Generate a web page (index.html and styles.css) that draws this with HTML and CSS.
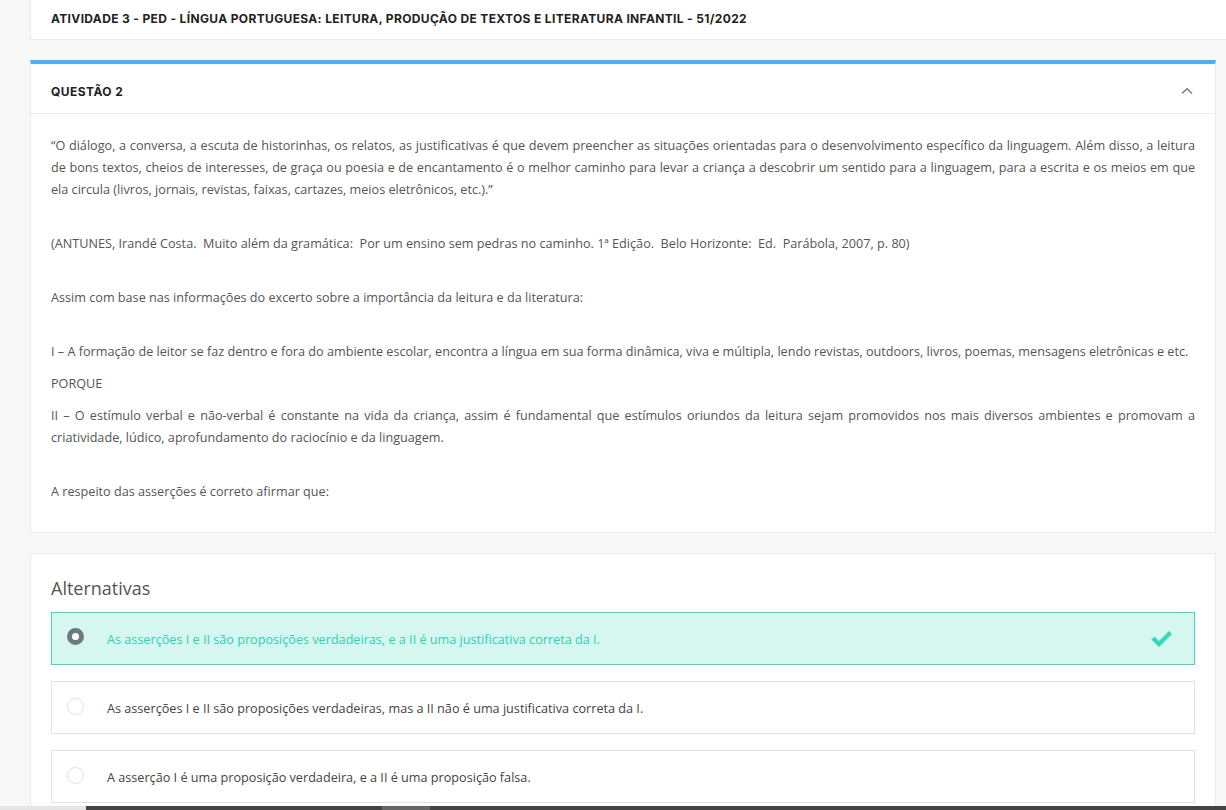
FILE: index.html
```html
<!DOCTYPE html>
<html lang="pt">
<head>
<meta charset="utf-8">
<title>Questão 2</title>
<link rel="stylesheet" href="styles.css">
</head>
<body>
<div class="page">
  <header class="topbar">
    <h1 class="activity-title">ATIVIDADE 3 - PED - LÍNGUA PORTUGUESA: LEITURA, PRODUÇÃO DE TEXTOS E LITERATURA INFANTIL - 51/2022</h1>
  </header>

  <section class="question">
    <div class="q-head">
      <h2 class="q-title">QUESTÃO 2</h2>
      <svg class="chevron" width="12" height="8" viewBox="0 0 12 8"><path d="M1 6.5 L6 1.8 L11 6.5" fill="none" stroke="#777" stroke-width="1.4"/></svg>
    </div>
    <div class="q-body">
      <p class="gap">“O diálogo, a conversa, a escuta de historinhas, os relatos, as justificativas é que devem preencher as situações orientadas para o desenvolvimento específico da linguagem. Além disso, a leitura de bons textos, cheios de interesses, de graça ou poesia e de encantamento é o melhor caminho para levar a criança a descobrir um sentido para a linguagem, para a escrita e os meios em que ela circula (livros, jornais, revistas, faixas, cartazes, meios eletrônicos, etc.).”</p>
      <p class="gap">(ANTUNES, Irandé Costa.&nbsp; Muito além da gramática:&nbsp; Por um ensino sem pedras no caminho. 1ª Edição.&nbsp; Belo Horizonte:&nbsp; Ed.&nbsp; Parábola, 2007, p. 80)</p>
      <p class="gap">Assim com base nas informações do excerto sobre a importância da leitura e da literatura:</p>
      <p>I – A formação de leitor se faz dentro e fora do ambiente escolar, encontra a língua em sua forma dinâmica, viva e múltipla, lendo revistas, outdoors, livros, poemas, mensagens eletrônicas e etc.</p>
      <p>PORQUE</p>
      <p class="gap">II – O estímulo verbal e não-verbal é constante na vida da criança, assim é fundamental que estímulos oriundos da leitura sejam promovidos nos mais diversos ambientes e promovam a criatividade, lúdico, aprofundamento do raciocínio e da linguagem.</p>
      <p class="last">A respeito das asserções é correto afirmar que:</p>
    </div>
  </section>

  <section class="alts">
    <h3 class="alts-title">Alternativas</h3>
    <ul class="options">
      <li class="option correct">
        <span class="radio checked"></span>
        <span class="opt-text">As asserções I e II são proposições verdadeiras, e a II é uma justificativa correta da I.</span>
        <svg class="check" width="22" height="18" viewBox="0 0 22 18"><path d="M0.5 9.5 L3.5 6.5 L8 11 L18 1 L21 4 L8 17 Z" fill="#33d9bd"/></svg>
      </li>
      <li class="option">
        <span class="radio"></span>
        <span class="opt-text">As asserções I e II são proposições verdadeiras, mas a II não é uma justificativa correta da I.</span>
      </li>
      <li class="option">
        <span class="radio"></span>
        <span class="opt-text">A asserção I é uma proposição verdadeira, e a II é uma proposição falsa.</span>
      </li>
    </ul>
  </section>
</div>
<div class="hscroll"><div class="hscroll-track"><div class="hscroll-thumb"></div></div></div>
</body>
</html>
```

FILE: styles.css
```css
* { box-sizing: border-box; }

html, body {
  margin: 0;
  padding: 0;
}

body {
  background: #f8f8f8;
  font-family: "Open Sans", "Noto Sans", sans-serif;
  color: #555;
  overflow: hidden;
  height: 810px;
}

.page {
  padding-left: 30px;
  padding-right: 10px;
}

.topbar {
  margin-right: -10px;
  height: 40px;
  background: #fff;
  border-left: 1px solid #ececec;
  border-bottom: 1px solid #ececec;
  display: flex;
  align-items: center;
  padding-left: 20px;
  padding-bottom: 3px;
}

.activity-title {
  margin: 0;
  font-family: "Inter", "Liberation Sans", sans-serif;
  font-weight: 700;
  font-size: 12px;
  letter-spacing: 0.35px;
  color: #222;
}

.question {
  margin-top: 20px;
  background: #fff;
  border: 1px solid #ebebeb;
  border-top: 4px solid #4ab0f2;
}

.q-head {
  height: 50px;
  display: flex;
  align-items: center;
  justify-content: space-between;
  padding: 6px 22px 0 20px;
  border-bottom: 1px solid #ebebeb;
}

.q-title {
  margin: 0;
  font-family: "Inter", "Liberation Sans", sans-serif;
  font-weight: 700;
  font-size: 12px;
  color: #222;
  letter-spacing: 0.45px;
}

.chevron { display: block; margin-top: -2px; }

.q-body {
  padding: 20px 20px 30px 20px;
  font-size: 12.65px;
  line-height: 22px;
  color: #555;
}

.q-body p {
  margin: 0 0 10px 0;
  text-align: justify;
}

.q-body p.gap { margin-bottom: 32px; }
.q-body p.last { margin-bottom: 0; }

.alts {
  margin-top: 20px;
  background: #fff;
  border: 1px solid #ebebeb;
  padding: 22px 20px 20px 20px;
}

.alts-title {
  margin: 0 0 12px 0;
  font-size: 18px;
  line-height: 24px;
  font-weight: 400;
  color: #555;
}

.options {
  list-style: none;
  margin: 0;
  padding: 0;
  display: flex;
  flex-direction: column;
  gap: 16px;
}

.option {
  height: 53px;
  border: 1px solid #e3e3e3;
  background: #fff;
  display: flex;
  align-items: center;
  padding: 0 21px 0 15px;
  font-size: 12.65px;
  color: #444;
}

.option.correct {
  background: #d5f7f0;
  border-color: #3cd9c0;
  color: #2fd0b4;
}

.radio {
  width: 17px;
  height: 17px;
  border-radius: 50%;
  border: 1px solid #e2e2e2;
  background: #fff;
  flex: none;
  margin-right: 23px;
  margin-top: -2px;
}

.radio.checked {
  border: 5px solid #6c7b81;
  background: #fff;
  margin-top: -4px;
}

.opt-text { flex: 1; }

.check { display: block; flex: none; }

.hscroll {
  position: fixed;
  left: 0;
  right: 0;
  bottom: 0;
  height: 4px;
  background: #e6e6e6;
  padding-left: 86px;
}

.hscroll-track {
  height: 4px;
  background: #444;
  padding-left: 296px;
}

.hscroll-thumb {
  width: 48px;
  height: 4px;
  background: #666;
}
```
